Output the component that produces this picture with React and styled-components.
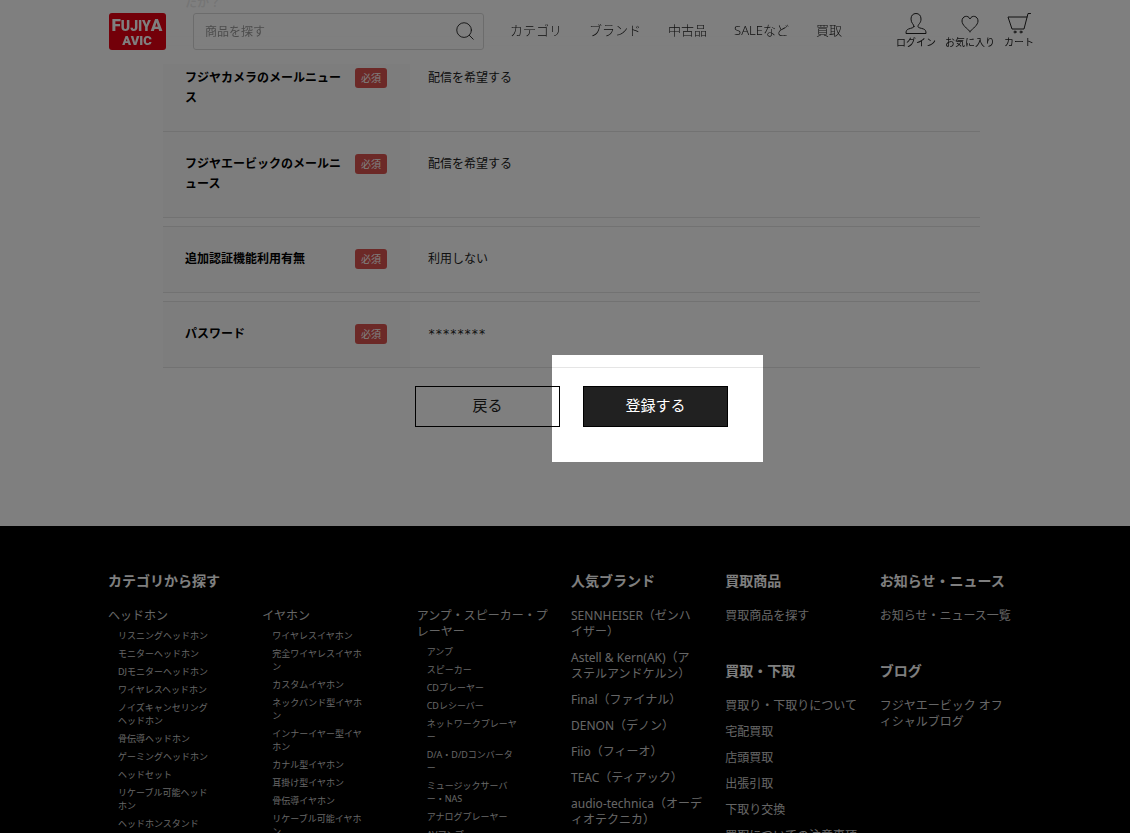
import { Search } from 'lucide-react'
import styled, { createGlobalStyle } from 'styled-components'

const GlobalStyle = createGlobalStyle`
  * { box-sizing: border-box; }

  body {
    margin: 0;
    background: #fff;
    color: #212121;
    font-family: "Noto Sans", "Noto Sans CJK JP", sans-serif;
    font-size: 12px;
  }

  a { color: inherit; text-decoration: none; }
  ul { list-style: none; margin: 0; padding: 0; }
`

const Page = styled.div`
  height: 100vh;
  overflow: hidden;
`

const Header = styled.header`
  position: sticky;
  top: 0;
  z-index: 2;
  height: 64px;
  background: rgba(255, 255, 255, 0.92);
`

const HeaderInner = styled.div`
  display: flex;
  align-items: center;
  height: 62px;
  margin: 0 96px 0 108px;
`

const Logo = styled.a`
  display: block;
  width: 59px;
  height: 37px;
  margin-right: 26px;

  svg { display: block; }
`

const SearchForm = styled.form`
  display: flex;
  align-items: center;
  flex: 0 1 291px;
  height: 37px;
  border: 1px solid #d8d8d8;
  border-radius: 3px;

  input {
    flex: 1;
    min-width: 0;
    padding: 0 11px;
    border: 0;
    outline: 0;
    background: none;
    font: inherit;
  }

  input::placeholder { color: #999; opacity: 1; }

  button {
    display: flex;
    padding: 0 7px;
    border: 0;
    background: none;
    color: #212121;
  }
`

const Nav = styled.nav`
  display: flex;
  gap: 27px;
  margin-left: 26px;
  padding-bottom: 4px;
  font-size: 13px;
  font-weight: 300;
  white-space: nowrap;
`

const Tools = styled.div`
  display: flex;
  gap: 9px;
  margin-left: auto;
  padding-bottom: 1px;
  font-size: 10px;
  line-height: 13px;
  white-space: nowrap;

  a {
    display: flex;
    flex-direction: column;
    align-items: center;
  }
`

const Main = styled.main`
  margin: -94px 150px 0 163px;
`

const Table = styled.table`
  width: 100%;
  margin-bottom: 8px;
  border-collapse: collapse;
  table-layout: fixed;
  line-height: 20px;

  tr {
    border-top: 1px solid #e5e5e5;
    border-bottom: 1px solid #e5e5e5;
  }

  th {
    width: 247px;
    padding: 22px 23px 23px 22px;
    background: #fafafa;
    color: #000;
    text-align: left;
    font-weight: 700;
    vertical-align: top;
  }

  td {
    padding: 22px 18px 23px;
    vertical-align: top;
  }
`

const Label = styled.div`
  display: flex;
  justify-content: space-between;
  align-items: flex-start;
  gap: 12px;
`

const Required = styled.span`
  flex: none;
  padding: 0 6px;
  border-radius: 3px;
  background: #d9534f;
  color: #fff;
  font-size: 10px;
  font-weight: 400;
  line-height: 20px;
`

const Masked = styled.span`
  font-family: "DejaVu Sans Mono", monospace;
`

const Actions = styled.div`
  display: flex;
  justify-content: center;
  gap: 23px;
  padding-top: 10px;
`

const Button = styled.button`
  width: 145px;
  height: 41px;
  padding: 0 0 4px;
  border: 1px solid #000;
  background: ${props => props.$primary ? '#212121' : 'transparent'};
  color: ${props => props.$primary ? '#fff' : '#212121'};
  font: inherit;
  font-size: 15px;
`

const Target = styled.div`
  position: relative;
`

// Dims the whole page except the frame around its parent
const Spotlight = styled.div`
  position: absolute;
  z-index: 10;
  top: -31px;
  right: -35px;
  bottom: -35px;
  left: -31px;
  box-shadow: 0 0 0 200vmax rgba(0, 0, 0, 0.5);
  pointer-events: none;
`

const Footer = styled.footer`
  display: grid;
  grid-template-columns: 3fr 1fr 1fr 1fr;
  margin-top: 99px;
  padding: 45px 96px 0 108px;
  background: #000;
  color: #ccc;
  font-size: 12px;
  line-height: 16px;
`

const FooterTitle = styled.h2`
  margin: 0 0 17px;
  color: #fff;
  font-size: 14px;
  line-height: 20px;
`

const FooterBlock = styled.section`
  margin-bottom: 37px;
`

const Categories = styled.div`
  display: grid;
  grid-template-columns: repeat(3, 1fr);

  > div { padding-right: 22px; }
`

const SubList = styled.ul`
  padding: 5px 25px 0 10px;
  font-size: 9px;
  line-height: 13px;
  white-space: pre-line;

  li { margin-bottom: 5px; }
`

const LinkList = styled.ul`
  padding-right: 18px;
  white-space: pre-line;

  li { margin-bottom: 10px; }
`

const formTables = [
  [['たか？', '']],
  [
    ['フジヤカメラのメールニュース', '配信を希望する'],
    ['フジヤエービックのメールニュース', '配信を希望する']
  ],
  [['追加認証機能利用有無', '利用しない']],
  [['パスワード', <Masked>********</Masked>]]
]

const categories = [
  ['ヘッドホン', ['リスニングヘッドホン', 'モニターヘッドホン', 'DJモニターヘッドホン', 'ワイヤレスヘッドホン', 'ノイズキャンセリングヘッドホン', '骨伝導ヘッドホン', 'ゲーミングヘッドホン', 'ヘッドセット', 'リケーブル可能ヘッドホン', 'ヘッドホンスタンド']],
  ['イヤホン', ['ワイヤレスイヤホン', '完全ワイヤレスイヤホン', 'カスタムイヤホン', 'ネックバンド型イヤホン', 'インナーイヤー型イヤホン', 'カナル型イヤホン', '耳掛け型イヤホン', '骨伝導イヤホン', 'リケーブル可能イヤホン']],
  ['アンプ・スピーカー・プレーヤー', ['アンプ', 'スピーカー', 'CDプレーヤー', 'CDレシーバー', 'ネットワークプレーヤー', 'D/A・D/Dコンバータ\nー', 'ミュージックサーバー・NAS', 'アナログプレーヤー', 'AVアンプ']]
]

const footerColumns = [
  [['人気ブランド', ['SENNHEISER（ゼンハ\nイザー）', 'Astell & Kern(AK)（ア\nステルアンドケルン）', 'Final（ファイナル）', 'DENON（デノン）', 'Fiio（フィーオ）', 'TEAC（ティアック）', 'audio-technica（オーディオテクニカ）']]],
  [
    ['買取商品', ['買取商品を探す']],
    ['買取・下取', ['買取り・下取りについて', '宅配買取', '店頭買取', '出張引取', '下取り交換', '買取についての注意事項']]
  ],
  [
    ['お知らせ・ニュース', ['お知らせ・ニュース一覧']],
    ['ブログ', ['フジヤエービック オフ\nィシャルブログ']]
  ]
]

const LogoMark = () => (
  <svg width="59" height="37" viewBox="0 0 59 37" role="img" aria-label="FUJIYA AVIC">
    <rect x="1" width="57" height="37" rx="3" fill="#e60012" />
    <g fill="#fff" fontFamily="Roboto, sans-serif" fontWeight="900" textAnchor="middle">
      <text x="29" y="18" fontSize="14">
        <tspan fontSize="17">F</tspan>UJIY<tspan fontSize="17">A</tspan>
      </text>
      <text x="29" y="32" fontSize="13">AVIC</text>
    </g>
  </svg>
)

const Icon = ({ children }) => (
  <svg width="26" height="24" viewBox="0 0 26 24" fill="none" stroke="#212121" strokeLinecap="round" strokeLinejoin="round">
    {children}
  </svg>
)

export default () => (
  <Page>
    <GlobalStyle />
    <Header>
      <HeaderInner>
        <Logo href="#"><LogoMark /></Logo>
        <SearchForm>
          <input type="text" placeholder="商品を探す" aria-label="商品を探す" />
          <button type="button" aria-label="検索"><Search size={22} strokeWidth={1} /></button>
        </SearchForm>
        <Nav>
          {['カテゴリ', 'ブランド', '中古品', 'SALEなど', '買取'].map(name => <a href="#" key={name}>{name}</a>)}
        </Nav>
        <Tools>
          <a href="#">
            <Icon><path d="M11 14.500c0-2.500-3-3-3-7.500C8 3.500 10 1.500 13 1.500s5 2 5 5.500c0 4.500-3 5-3 7.500 0 1.500 3 1.500 5.500 2.500 2 .8 2.500 2 2.500 4.500H3c0-2.500.5-3.700 2.500-4.500 2.500-1 5.500-1 5.500-2.500z" /></Icon>
            ログイン
          </a>
          <a href="#">
            <Icon><path d="M13 19.500C10 16.500 5 13 5 9c0-5 6-6.500 8-2 2-4.500 8-3 8 2 0 4-5 7.500-8 10.500z" /></Icon>
            お気に入り
          </a>
          <a href="#">
            <Icon>
              <path d="M24.500 1.500h-2.500l-4 15.500H6L2 5h19" />
              <circle cx="9" cy="20" r="1" />
              <circle cx="15" cy="20" r="1" />
            </Icon>
            カート
          </a>
        </Tools>
      </HeaderInner>
    </Header>

    <Main>
      {formTables.map(rows => (
        <Table key={rows[0][0]}>
          <tbody>
            {rows.map(([label, value]) => (
              <tr key={label}>
                <th scope="row">
                  <Label>
                    {label}
                    {value ? <Required>必須</Required> : null}
                  </Label>
                </th>
                <td>{value}</td>
              </tr>
            ))}
          </tbody>
        </Table>
      ))}
      <Actions>
        <Button type="button">戻る</Button>
        <Target>
          <Button type="submit" $primary>登録する</Button>
          <Spotlight />
        </Target>
      </Actions>
    </Main>

    <Footer>
      <FooterBlock>
        <FooterTitle>カテゴリから探す</FooterTitle>
        <Categories>
          {categories.map(([name, items]) => (
            <div key={name}>
              <a href="#">{name}</a>
              <SubList>
                {items.map(item => <li key={item}><a href="#">{item}</a></li>)}
              </SubList>
            </div>
          ))}
        </Categories>
      </FooterBlock>
      {footerColumns.map(blocks => (
        <div key={blocks[0][0]}>
          {blocks.map(([title, items]) => (
            <FooterBlock key={title}>
              <FooterTitle>{title}</FooterTitle>
              <LinkList>
                {items.map(item => <li key={item}><a href="#">{item}</a></li>)}
              </LinkList>
            </FooterBlock>
          ))}
        </div>
      ))}
    </Footer>
  </Page>
)
